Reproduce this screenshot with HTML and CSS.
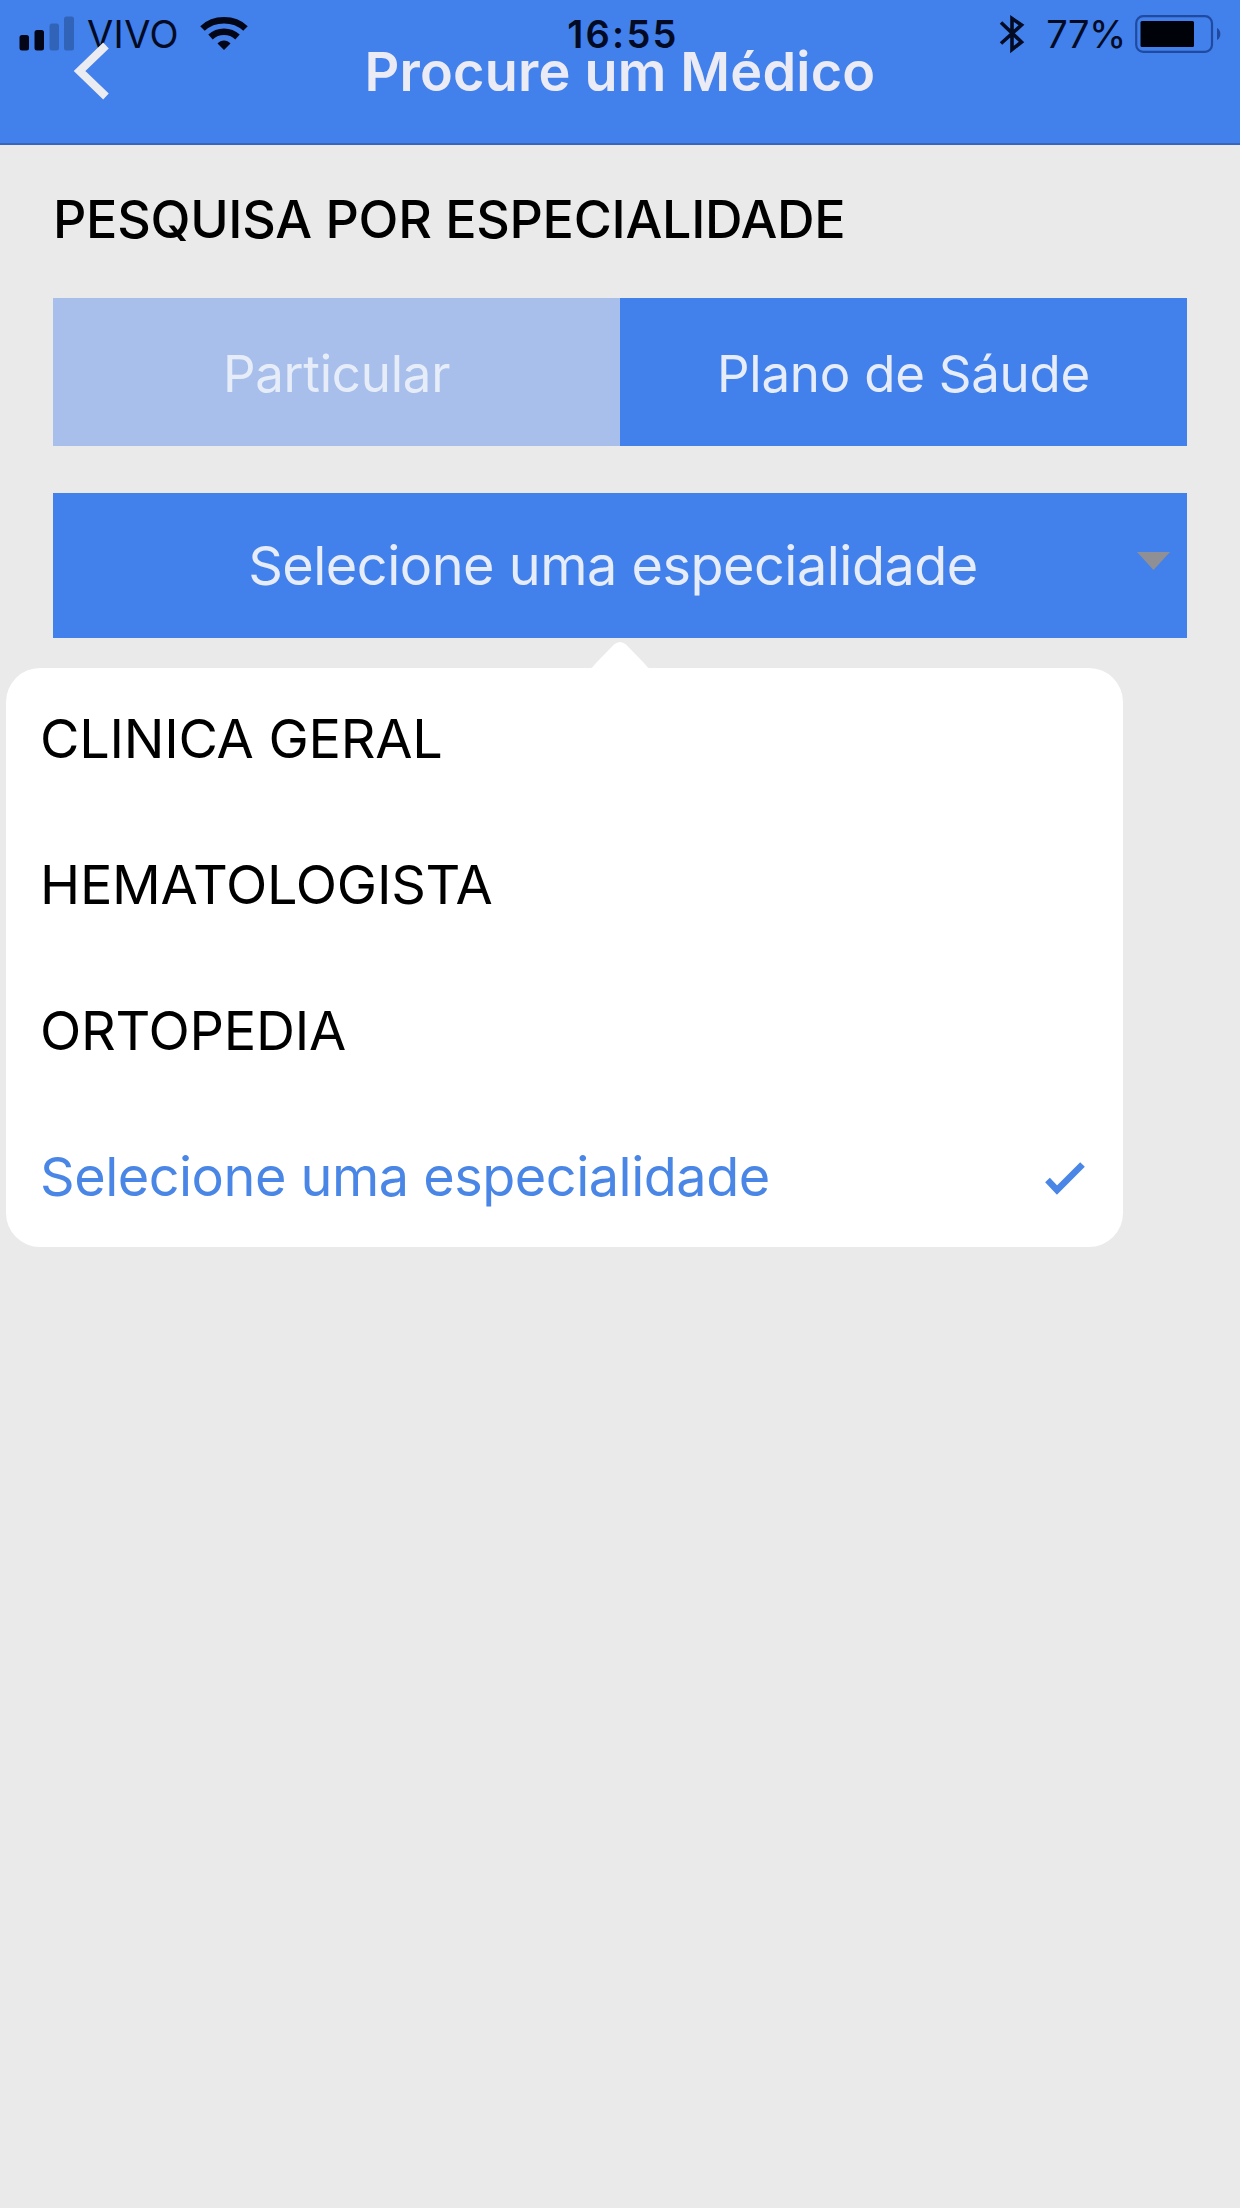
FILE: index.html
```html
<!DOCTYPE html>
<html lang="pt-BR">
<head>
    <meta charset="UTF-8">
    <meta name="viewport" content="width=device-width, initial-scale=1.0">
    <title>Procure um Médico</title>
    <link rel="stylesheet" href="styles.css">
</head>
<body>
<div class="app">
    <header class="navbar">
        <!-- Status bar -->
        <div class="status-bar">
            <div class="status-left">
                <svg class="signal" width="56" height="36" viewBox="0 0 56 36">
                    <rect x="0.5" y="19" width="9.5" height="15.5" rx="2.5" fill="#020617"/>
                    <rect x="15.5" y="14" width="9.5" height="20.5" rx="2.5" fill="#020617"/>
                    <rect x="30.5" y="7.5" width="9.5" height="27" rx="2.5" fill="#3164b8"/>
                    <rect x="45" y="0.5" width="10" height="34" rx="2.5" fill="#3164b8"/>
                </svg>
                <span class="carrier">VIVO</span>
                <svg class="wifi" width="48" height="34" viewBox="0 0 48 34" fill="none" stroke="#020617">
                    <path d="M2.5 11.5 C14 0.5 34 0.5 45.5 11.5" stroke-width="6.5"/>
                    <path d="M10.5 20 C18 13 30 13 37.5 20" stroke-width="6.5"/>
                    <path d="M17.5 26.5 C21 22.5 27 22.5 30.5 26.5 L24 33 Z" fill="#020617" stroke="none"/>
                </svg>
            </div>
            <span class="clock">16:55</span>
            <div class="status-right">
                <svg class="bluetooth" width="26" height="40" viewBox="0 0 26 40" fill="none" stroke="#020a24" stroke-width="3.6">
                    <path d="M2 8.5 L22.5 28 L13 35.5 V4.5 L22.5 11 L2 29.5"/>
                </svg>
                <span class="percent">77%</span>
                <svg class="battery" width="88" height="38" viewBox="0 0 88 38">
                    <rect x="1.2" y="1.2" width="75.8" height="35.6" rx="7" fill="none" stroke="#1f4aa0" stroke-width="2.2"/>
                    <rect x="5.5" y="6" width="53.5" height="26" rx="1.5" fill="#00020a"/>
                    <path d="M82 13 C86.5 15 86.5 23 82 25 Z" fill="#1f4aa0"/>
                </svg>
            </div>
        </div>

        <svg class="back" width="38" height="60" viewBox="0 0 38 60">
            <path d="M33 4.5 L6.5 30 L33 55.5" fill="none" stroke="#ebebf2" stroke-width="8"/>
        </svg>
        <h1 class="title">Procure um Médico</h1>
    </header>

    <main class="content">
        <h2 class="section-title">PESQUISA POR ESPECIALIDADE</h2>

        <div class="tabs">
            <div class="tab tab-off">Particular</div>
            <div class="tab">Plano de Sáude</div>
        </div>

        <div class="select">
            <span class="select-label">Selecione uma especialidade</span>
            <svg class="caret" width="33" height="18" viewBox="0 0 33 18">
                <path d="M0 0 H33 L16.5 18 Z" fill="#8f9095"/>
            </svg>

            <!-- Options popover -->
            <div class="popover">
                <svg class="arrow" width="60" height="28" viewBox="0 0 60 28">
                    <path d="M0 28 Q3 26 6 22 L24 3.5 Q30 -1.5 36 3.5 L54 22 Q57 26 60 28 Z" fill="#fff"/>
                </svg>
                <ul class="options">
                    <li>CLINICA GERAL</li>
                    <li>HEMATOLOGISTA</li>
                    <li>ORTOPEDIA</li>
                    <li class="selected">
                        Selecione uma especialidade
                        <svg class="check" width="40" height="33" viewBox="0 0 40 33">
                            <path d="M2.5 18 L12 28 L37.5 2.5" fill="none" stroke="#4a86e6" stroke-width="6.5"/>
                        </svg>
                    </li>
                </ul>
            </div>
        </div>
    </main>
</div>
</body>
</html>
```
FILE: styles.css
```css
* {
    box-sizing: border-box;
}

body {
    margin: 0;
    background-color: #fff;
    font-family: Inter, "Liberation Sans", sans-serif;
}

.app {
    width: 1240px;
    height: 2208px;
    background-color: #eaeaea;
    overflow: hidden;
}

svg {
    display: block;
    flex-shrink: 0;
}

.navbar {
    position: relative;
    height: 145px;
    display: flex;
    align-items: center;
    justify-content: center;
    background-color: #4280eb;
    border-bottom: 2px solid #3866bd;
}

.title {
    margin: 0;
    color: #ebebf5;
    font-size: 54px;
    font-weight: 600;
    line-height: 1;
    letter-spacing: 0.2px;
}

/* sits on top of the navbar */
.status-bar {
    position: absolute;
    top: 0;
    left: 0;
    width: 100%;
    height: 67px;
    padding: 0 17px 0 19px;
    display: grid;
    grid-template-columns: 1fr auto 1fr;
    align-items: center;
    color: #020a24;
    font-size: 38px;
    line-height: 1;
}

.status-left,
.status-right {
    display: flex;
    align-items: center;
}

.status-right {
    justify-content: flex-end;
}

.carrier {
    margin-left: 12px;
    letter-spacing: 0.4px;
}

.wifi {
    margin-left: 21px;
}

.clock {
    font-weight: 600;
    letter-spacing: 2.2px;
    margin-left: 4px;
}

.percent {
    margin: 0 9px 0 21px;
    letter-spacing: -0.4px;
}

.back {
    position: absolute;
    left: 73px;
    top: 41px;
}

.content {
    padding: 0 53px;
}

.section-title {
    margin: 0;
    height: 153px;
    padding-bottom: 4px;
    display: flex;
    align-items: center;
    font-size: 52px;
    font-weight: 500;
    letter-spacing: -0.28px;
    color: #000;
}

.tabs {
    display: flex;
    height: 148px;
}

.tab {
    flex: 1;
    display: flex;
    align-items: center;
    justify-content: center;
    padding-top: 2px;
    background-color: #4280eb;
    color: #e6edf9;
    font-size: 51px;
    letter-spacing: -0.25px;
}

.tab-off {
    background-color: #a7bfea;
}

.select {
    position: relative;
    height: 145px;
    margin-top: 47px;
    display: flex;
    align-items: center;
    background-color: #4280eb;
    color: #e6edf9;
    font-size: 54px;
}

.select-label {
    flex: 1;
    padding-right: 14px;
    text-align: center;
    letter-spacing: -0.5px;
}

.caret {
    position: absolute;
    top: 59px;
    right: 17px;
}

.popover {
    position: absolute;
    top: 175px;
    left: -47px;
    width: 1117px;
    height: 579px;
    background-color: #fff;
    border-radius: 34px;
    color: #000;
}

.arrow {
    position: absolute;
    top: -27px;
    left: 584px;
}

.options {
    list-style: none;
    margin: -2px 0 0;
    padding: 0 38px 0 34px;
    letter-spacing: -0.25px;
}

.options li {
    height: 145.8px;
    display: flex;
    align-items: center;
    justify-content: space-between;
}

.options .selected {
    color: #4a86e6;
    letter-spacing: -0.5px;
}

.check {
    margin-top: 4px;
}
```
